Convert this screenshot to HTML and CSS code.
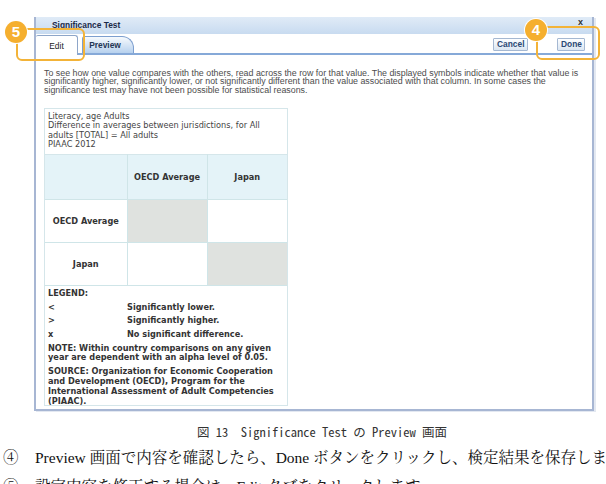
FILE: index.html
```html
<html lang="ja">
<head>
    <meta charset="UTF-8">
    <meta name="viewport" content="width=device-width, initial-scale=1.0">
    <title>Significance Test の Preview 画面</title>
    <link rel="stylesheet" href="styles.css">
</head>
<body>
    <div class="page">
        <div class="dialog">
            <div class="titlebar">
                <span class="title">Significance Test</span>
                <span class="close">x</span>
            </div>
            <div class="tabbar">
                <div class="tabs">
                    <div class="tab tab-edit">Edit</div>
                    <div class="tab tab-preview">Preview</div>
                </div>
                <div class="actions">
                    <button class="btn btn-cancel">Cancel</button>
                    <button class="btn btn-done">Done</button>
                </div>
            </div>
            <div class="dialog-body">
                <p class="intro">To see how one value compares with the others, read across the row for that value. The displayed symbols indicate whether that value is significantly higher, significantly lower, or not significantly different than the value associated with that column. In some cases the significance test may have not been possible for statistical reasons.</p>
                <div class="sig-box">
                    <div class="sig-caption">
                        Literacy, age Adults<br>
                        Difference in averages between jurisdictions, for All adults [TOTAL] = All adults<br>
                        PIAAC 2012
                    </div>
                    <table class="sig-grid">
                        <colgroup><col class="c1"><col class="c2"><col class="c3"></colgroup>
                        <thead>
                            <tr>
                                <th></th>
                                <th>OECD Average</th>
                                <th>Japan</th>
                            </tr>
                        </thead>
                        <tbody>
                            <tr>
                                <th class="row-head">OECD Average</th>
                                <td class="self"></td>
                                <td></td>
                            </tr>
                            <tr>
                                <th class="row-head">Japan</th>
                                <td></td>
                                <td class="self"></td>
                            </tr>
                        </tbody>
                    </table>
                    <div class="legend">
                        <div class="legend-line">LEGEND:</div>
                        <div class="legend-row"><span>&lt;</span><span>Significantly lower.</span></div>
                        <div class="legend-row"><span>&gt;</span><span>Significantly higher.</span></div>
                        <div class="legend-row"><span>x</span><span>No significant difference.</span></div>
                        <div class="legend-line">NOTE: Within country comparisons on any given year are dependent with an alpha level of 0.05.</div>
                        <div class="legend-line">SOURCE: Organization for Economic Cooperation and Development (OECD), Program for the International Assessment of Adult Competencies (PIAAC).</div>
                    </div>
                </div>
            </div>
        </div>

        <p class="figcap">図 13　Significance Test の Preview 画面</p>

        <div class="steps">
            <div class="step"><span class="num">④</span><span>Preview 画面で内容を確認したら、Done ボタンをクリックし、検定結果を保存します。</span></div>
            <div class="step"><span class="num">⑤</span><span>設定内容を修正する場合は、Edit タブをクリックします。</span></div>
        </div>

        <!-- callouts drawn over the screenshot -->
        <div class="callout callout-edit"></div>
        <div class="badge badge-5">5</div>
        <div class="callout callout-done"></div>
        <div class="badge badge-4">4</div>
    </div>
</body>
</html>
```

FILE: styles.css
```css
* {box-sizing: border-box;}
body {margin: 0; background: #fff; font-family: "Liberation Sans", Arial, sans-serif; overflow: hidden;}
.page {position: relative; width: 606px; height: 484px; padding-top: 17px; overflow: hidden;}

.dialog {margin-left: 34px; width: 560px; height: 394px; border: 2px solid #a7b6d3; border-top: none; box-shadow: 2px 1px 0 #e3e8f1;}
.titlebar {height: 17px; display: flex; justify-content: space-between; align-items: center; padding: 0 9px 2px 16px; background: linear-gradient(#e0ebf7, #c8dbf0);}
.title {font-weight: bold; font-size: 8.4px; color: #1c2a48;}
.close {font-weight: bold; font-size: 9px; color: #333; margin-top: -6px;}

.tabbar {height: 21px; display: flex; justify-content: space-between; border-bottom: 2px solid #86a9d8; background: #fff;}
.tabs {display: flex; align-items: flex-end; gap: 4px;}
.tab {height: 18px; font-size: 8.4px; color: #222; display: flex; align-items: center; justify-content: center; border: 1px solid #8ea6c9; border-bottom: none;}
.tab-edit {width: 42px; background: #fff; border-radius: 2px 3px 0 0; margin-bottom: -2px; height: 20px; border-left: none;}
.tab-preview {width: 52px; height: 17px; font-weight: bold; color: #1f3554; background: linear-gradient(#f7fafd, #b7d1ee); border-color: #7d9fcf; border-radius: 3px 12px 0 0; padding-right: 6px;}
.actions {display: flex; align-items: center; gap: 29px; padding: 1px 7px 0 0;}
.btn {height: 13px; padding: 0 3px; font-family: "Liberation Sans", Arial, sans-serif; font-weight: bold; font-size: 8.4px; color: #2a4874; background: linear-gradient(#fdfeff, #dbe6f2); border: 1px solid #a5b8d2; border-radius: 1px;}
.btn-cancel {width: 35px;}
.btn-done {width: 28px;}

.dialog-body {padding: 14px 0 0 8px;}
.intro {margin: 0; width: 545px; font-size: 8.85px; line-height: 8.3px; color: #4d4d4d;}
.sig-box {margin-top: 14px; width: 244px; height: 298px; border: 1px solid #d5e6ea; font-family: "DejaVu Sans", Verdana, sans-serif; font-size: 8.2px; color: #333;}
.sig-caption {height: 45px; padding: 3px 2px 0 3px; line-height: 9.5px; color: #444;}
.sig-grid {width: 100%; border-collapse: collapse; table-layout: fixed; font-weight: bold; color: #333;}
.sig-grid .c1 {width: 82px;}
.sig-grid .c2 {width: 80px;}
.sig-grid th, .sig-grid td {border: 1px solid #cfe5e8; padding: 0; text-align: center; font-size: 8.2px;}
.sig-grid tr:first-child th {border-top-color: #d5e6ea;}
.sig-grid th:first-child, .sig-grid td:first-child {border-left: none;}
.sig-grid th:last-child, .sig-grid td:last-child {border-right: none;}
.sig-grid thead th {height: 45px; background: #e4f3f8;}
.sig-grid tbody tr {height: 43px;}
.sig-grid .row-head {background: #fff;}
.sig-grid .self {background: #dfe2df;}
.legend {padding: 3px 1px 0 3px; font-weight: bold; line-height: 9.8px; color: #333;}
.legend > div + div {margin-top: 3.9px;}
.legend-row {display: grid; grid-template-columns: 79px 1fr;}

.figcap {margin: 13px 0 0; text-align: center; font-family: "Noto Sans Mono CJK JP", "Liberation Mono", "Noto Sans CJK JP", monospace; font-size: 12.5px; line-height: 15px; color: #333; padding-left: 38px;}
.steps {margin-top: 4px; font-family: "Liberation Serif", "Noto Serif CJK JP", "Noto Sans CJK JP", serif; font-size: 15.5px; line-height: 29px; color: #111; white-space: nowrap;}
.step {display: flex; padding-left: 3px;}
.step .num {flex: none; width: 32px;}

.callout {position: absolute; border: 2.5px solid #f3b338; border-radius: 6px;}
.callout-edit {left: 16px; top: 28px; width: 69px; height: 33px;}
.callout-done {left: 536px; top: 26px; width: 64px; height: 34px;}
.badge {position: absolute; width: 22px; height: 22px; border-radius: 50%; background: #f5af2f; box-shadow: 0 0 0 1px #fff; color: #fff; font-family: "Liberation Sans", Arial, sans-serif; font-weight: bold; font-size: 15px; line-height: 22px; text-align: center;}
.badge-5 {left: 5px; top: 21px;}
.badge-4 {left: 525px; top: 19px;}
```
